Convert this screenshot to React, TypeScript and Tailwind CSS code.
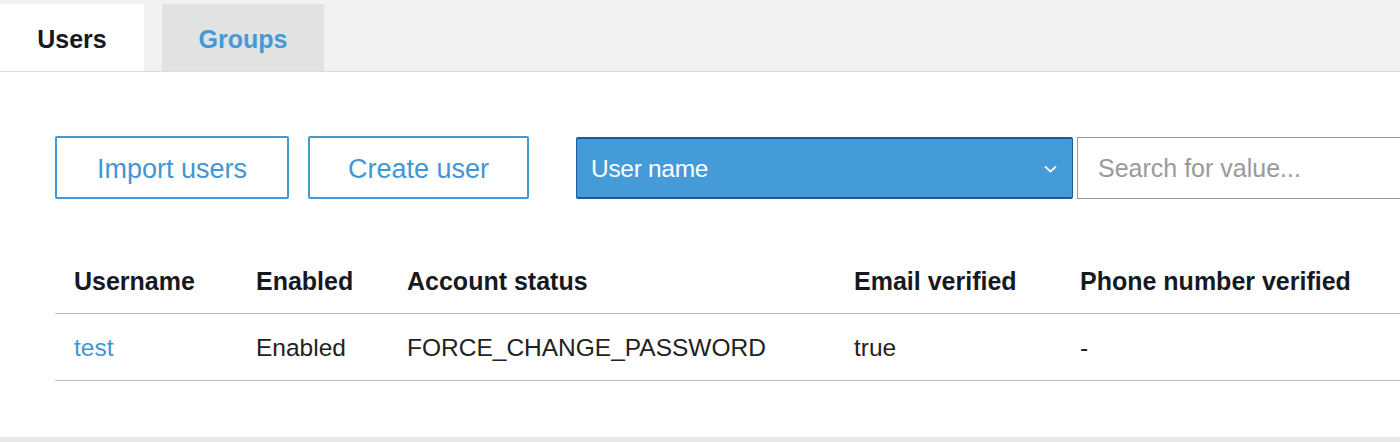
import React from "react";

const columns = ["Username", "Enabled", "Account status", "Email verified", "Phone number verified"];

function Chevron() {
  return (
    <svg width="13" height="8" viewBox="0 0 13 8" fill="none">
      <path d="M1 1.5 L6.5 6.5 L12 1.5" stroke="white" strokeWidth="1.7" />
    </svg>
  );
}

export default function App() {
  return (
    <div className="w-[1400px] h-[442px] bg-white flex flex-col overflow-hidden font-['Liberation_Sans',Arial,sans-serif]">
      {/* tabs */}
      <div className="h-[72px] shrink-0 bg-[#f1f1f1] border-b border-[#dcdcdc] flex items-end">
        <div className="w-[144px] h-[67px] pt-[5px] bg-white flex items-center justify-center text-[25px] font-bold text-[#16191f]">
          Users
        </div>
        <div className="ml-[18px] w-[162px] h-[67px] pt-[5px] bg-[#e1e2e2] flex items-center justify-center text-[25px] font-bold text-[#449ad6]">
          Groups
        </div>
      </div>

      <div className="flex-1 pl-[55px]">
        {/* toolbar */}
        <div className="mt-[64px] flex items-center">
          <button className="shrink-0 w-[234px] h-[63px] pt-[3px] border-2 border-[#4399d6] rounded-[2px] text-[27px] text-[#4495d4] bg-white">
            Import users
          </button>
          <button className="shrink-0 ml-[19px] w-[221px] h-[63px] pt-[3px] border-2 border-[#4399d6] rounded-[2px] text-[27px] text-[#4495d4] bg-white">
            Create user
          </button>
          <div className="shrink-0 ml-[47px] w-[497px] h-[62px] pt-[3px] bg-[#449bd8] border border-[#1f5b92] border-y-2 rounded-[2px] flex items-center justify-between pl-[14px] pr-[15px]">
            <span className="text-[24.5px] text-white tracking-[-0.3px]">User name</span>
            <Chevron />
          </div>
          <div className="shrink-0 ml-[4px] w-[420px] h-[62px] pt-[2px] border border-[#9a9a9a] bg-white flex items-center pl-[20px]">
            <span className="text-[25px] text-[#9a9a9a]">Search for value...</span>
          </div>
        </div>

        {/* table */}
        <div className="mt-[48px] text-[#16191f]">
          <div className="grid grid-cols-[182px_151px_447px_226px_1fr] h-[67px] pt-[3px] items-center border-b border-[#bcc0c4]">
            {columns.map((c) => (
              <div key={c} className="pl-[19px] text-[25px] font-bold whitespace-nowrap">
                {c}
              </div>
            ))}
          </div>
          <div className="grid grid-cols-[182px_151px_447px_226px_1fr] h-[67px] pt-[2px] items-center border-b border-[#bcc0c4] text-[24.5px] text-[#222]">
            <div className="pl-[19px] text-[#4195d4]">test</div>
            <div className="pl-[19px]">Enabled</div>
            <div className="pl-[19px]">FORCE_CHANGE_PASSWORD</div>
            <div className="pl-[19px]">true</div>
            <div className="pl-[19px]">-</div>
          </div>
        </div>
      </div>

      <div className="h-[5px] shrink-0 bg-[#e6e7e7]" />
    </div>
  );
}
